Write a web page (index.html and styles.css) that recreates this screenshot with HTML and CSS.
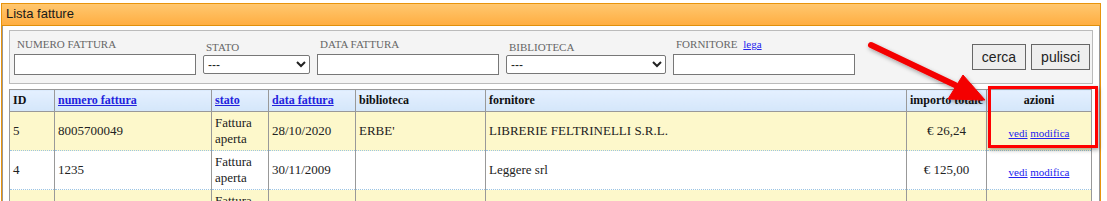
FILE: index.html
```html
<!DOCTYPE html>
<html lang="it">
<head>
    <meta charset="UTF-8">
    <title>Lista fatture</title>
    <link rel="stylesheet" href="styles.css">
</head>
<body>
    <div class="panel">
        <div class="panel-title">Lista fatture</div>
        <div class="panel-body">
            <div class="filters">
                <div class="field">
                    <label>NUMERO FATTURA</label>
                    <input type="text" class="text-in w182">
                </div>
                <div class="field sel">
                    <label>STATO</label>
                    <select class="w106"><option>---</option></select>
                </div>
                <div class="field">
                    <label>DATA FATTURA</label>
                    <input type="text" class="text-in w182">
                </div>
                <div class="field sel">
                    <label>BIBLIOTECA</label>
                    <select class="w159"><option>---</option></select>
                </div>
                <div class="field">
                    <label>FORNITORE <a href="#" class="lega">lega</a></label>
                    <input type="text" class="text-in w182">
                </div>
                <div class="buttons">
                    <button>cerca</button>
                    <button>pulisci</button>
                </div>
            </div>

            <table class="list">
                <thead>
                    <tr>
                        <th class="c-id">ID</th>
                        <th class="c-num"><a href="#">numero fattura</a></th>
                        <th class="c-stato"><a href="#">stato</a></th>
                        <th class="c-data"><a href="#">data fattura</a></th>
                        <th class="c-bib">biblioteca</th>
                        <th class="c-forn">fornitore</th>
                        <th class="c-imp">importo totale</th>
                        <th class="c-az">azioni</th>
                    </tr>
                </thead>
                <tbody>
                    <tr class="odd">
                        <td>5</td>
                        <td>8005700049</td>
                        <td>Fattura aperta</td>
                        <td>28/10/2020</td>
                        <td>ERBE'</td>
                        <td>LIBRERIE FELTRINELLI S.R.L.</td>
                        <td class="num">€ 26,24</td>
                        <td class="act"><a href="#">vedi</a> <a href="#">modifica</a></td>
                    </tr>
                    <tr>
                        <td>4</td>
                        <td>1235</td>
                        <td>Fattura aperta</td>
                        <td>30/11/2009</td>
                        <td></td>
                        <td>Leggere srl</td>
                        <td class="num">€ 125,00</td>
                        <td class="act"><a href="#">vedi</a> <a href="#">modifica</a></td>
                    </tr>
                    <tr class="odd">
                        <td>3</td>
                        <td>1234</td>
                        <td>Fattura aperta</td>
                        <td>01/10/2009</td>
                        <td></td>
                        <td>Leggere srl</td>
                        <td class="num">€ 10,00</td>
                        <td class="act"><a href="#">vedi</a> <a href="#">modifica</a></td>
                    </tr>
                </tbody>
            </table>
        </div>
    </div>

    <!-- annotation overlay -->
    <div class="highlight"></div>
    <svg class="arrow" width="1107" height="201" viewBox="0 0 1107 201">
        <defs>
            <filter id="sh" x="-20%" y="-20%" width="140%" height="140%">
                <feDropShadow dx="1" dy="2" stdDeviation="2" flood-color="#000" flood-opacity="0.35"/>
            </filter>
        </defs>
        <g filter="url(#sh)" fill="#f40000" stroke="#f40000">
            <line x1="871" y1="45" x2="955" y2="85" stroke-width="6" stroke-linecap="round"/>
            <polygon points="985,100 948,99 963,75" stroke-width="1" stroke-linejoin="round"/>
        </g>
    </svg>
</body>
</html>
```

FILE: styles.css
```css
body {
    margin: 0;
    padding: 3px 6px 0 1px;
    font-family: "Liberation Serif", serif;
    color: #222;
    background: #fff;
    overflow: hidden;
}
.panel {
    border: 1px solid #e8940c;
    border-bottom: none;
}
.panel-title {
    height: 21px;
    line-height: 20px;
    padding-left: 4px;
    font-family: "Liberation Sans", Arial, sans-serif;
    font-size: 13px;
    color: #1a1a1a;
    background: linear-gradient(#ffc76f, #ffae42);
    border-bottom: 1px solid #e0900c;
}
.panel-body {
    border-left: 1px solid #999;
    border-right: 1px solid #999;
    padding: 4px 6px 20px 6px;
    background: #fff;
}
.filters {
    display: flex;
    align-items: flex-end;
    background: #f4f4f4;
    border: 1px solid #bbb;
    padding: 0 2px 8px 4px;
    height: 44px;
}
.field {
    display: flex;
    flex-direction: column;
    margin-right: 7px;
}
.field label {
    font-size: 11px;
    color: #666;
    padding-left: 3px;
    margin-bottom: 4px;
}
.field.sel label {
    margin-bottom: 2px;
}
.lega {
    margin-left: 3px;
    color: #22e;
    font-size: 11px;
}
.text-in {
    box-sizing: border-box;
    height: 21px;
    border: 1px solid #777;
    background: #fff;
    margin: 0;
    padding: 0 3px;
}
.w182 { width: 182px; }
.w106 { width: 107px; }
.w159 { width: 160px; }
select {
    box-sizing: border-box;
    height: 19px;
    margin: 0 0 1px 0;
    border: 1px solid #777;
    border-radius: 2px;
    background: #fff;
    font-family: "Liberation Sans", Arial, sans-serif;
    font-size: 12px;
    color: #222;
}
.buttons {
    margin-left: auto;
    align-self: flex-start;
    margin-top: 13px;
    display: flex;
    gap: 5px;
}
.buttons button {
    height: 26px;
    padding: 0 9px;
    font-family: "Liberation Sans", Arial, sans-serif;
    font-size: 14px;
    color: #222;
    background: #eee;
    border: 1px solid #666;
    border-radius: 0;
}
.list {
    width: 1083px;
    margin-top: 5px;
    border-collapse: collapse;
    font-size: 13px;
    border: 1px solid #999;
}
.list th {
    height: 21px;
    padding: 0 3px;
    font-size: 12px;
    font-weight: bold;
    text-align: left;
    background: linear-gradient(#e4f0ff, #d4e6fa);
    border: 1px solid #999;
    color: #111;
}
.list th a {
    color: #22d;
}
.list th.c-az {
    text-align: center;
}
.list td {
    height: 38px;
    padding: 0 3px;
    border-left: 1px solid #999;
    border-right: 1px solid #999;
    border-bottom: 1px dotted #9bc4e4;
    line-height: 16px;
}
.list tr.odd td {
    background: #fdf8cb;
}
.c-id { width: 38px; }
.c-num { width: 150px; }
.c-stato { width: 50px; }
.c-data { width: 80px; }
.c-bib { width: 123px; }
.c-imp { width: 73px; }
.c-az { width: 98px; }
.list td.num {
    text-align: center;
}
.list td.act {
    height: 34px;
    text-align: center;
    font-size: 11px;
    padding-top: 4px;
}
.list td.act a {
    color: #22e;
}
.highlight {
    position: absolute;
    left: 988px;
    top: 86px;
    width: 104px;
    height: 56px;
    border: 3px solid #f00;
    box-shadow: 1px 2px 4px rgba(0, 0, 0, 0.35);
}
.arrow {
    position: absolute;
    left: 0;
    top: 0;
    pointer-events: none;
}
```
